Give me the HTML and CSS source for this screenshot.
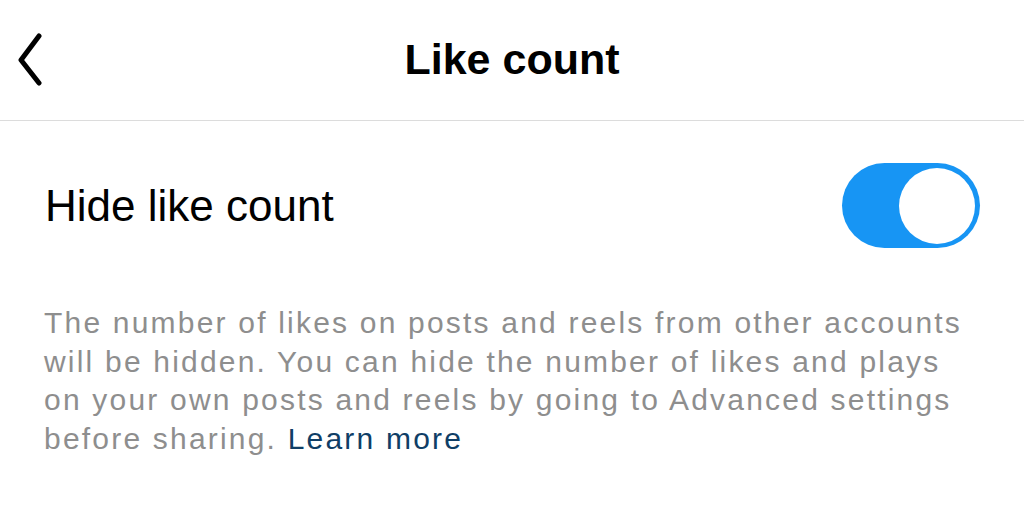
FILE: index.html
```html
<!DOCTYPE html>
<html lang="en">
<head>
<meta charset="utf-8">
<title>Like count</title>
<link rel="stylesheet" href="styles.css">
</head>
<body>
<header class="topbar">
  <button class="back" aria-label="Back">
    <svg viewBox="0 0 30 60" width="30" height="60" aria-hidden="true">
      <polyline points="21,7 3,31 21,54" fill="none" stroke="#000" stroke-width="5" stroke-linecap="round" stroke-linejoin="round"/>
    </svg>
  </button>
  <h1 class="title">Like count</h1>
</header>
<main class="content">
  <div class="setting-row">
    <span class="setting-label">Hide like count</span>
    <span class="toggle on" role="switch" aria-checked="true"><span class="knob"></span></span>
  </div>
  <p class="description">The number of likes on posts and reels from other accounts<br>will be hidden. You can hide the number of likes and plays<br>on your own posts and reels by going to Advanced settings<br>before sharing. <a class="link" href="#">Learn more</a></p>
</main>
</body>
</html>
```

FILE: styles.css
```css
* { box-sizing: border-box; }
html, body {
  margin: 0;
  padding: 0;
  background: #ffffff;
  font-family: "Liberation Sans", Arial, sans-serif;
  color: #000;
}
.topbar {
  position: relative;
  height: 121px;
  border-bottom: 1px solid #dcdcdc;
  display: flex;
  align-items: center;
  justify-content: center;
}
.back {
  position: absolute;
  left: 18px;
  top: 29px;
  padding: 0;
  border: 0;
  background: none;
  display: block;
}
.back svg { display: block; }
.title {
  margin: 0;
  font-size: 43px;
  font-weight: 700;
  line-height: 1;
  padding-bottom: 2px;
}
.content {
  padding: 0 44px 0 44px;
}
.setting-row {
  display: flex;
  align-items: center;
  justify-content: space-between;
  padding: 42px 0 42px 1px;
}
.setting-label {
  font-size: 44px;
  line-height: 1;
  letter-spacing: 0;
}
.toggle {
  display: flex;
  align-items: center;
  justify-content: flex-end;
  width: 138px;
  height: 85px;
  border-radius: 43px;
  background: #1795f4;
  padding: 0 5px;
}
.knob {
  width: 76px;
  height: 76px;
  border-radius: 50%;
  background: #fff;
}
.description {
  margin: 14px 0 0 0;
  font-size: 30px;
  line-height: 38.7px;
  color: #8e8e8e;
  letter-spacing: 2.2px;
  white-space: nowrap;
}
.link {
  color: #0f3e66;
  text-decoration: none;
}
```
